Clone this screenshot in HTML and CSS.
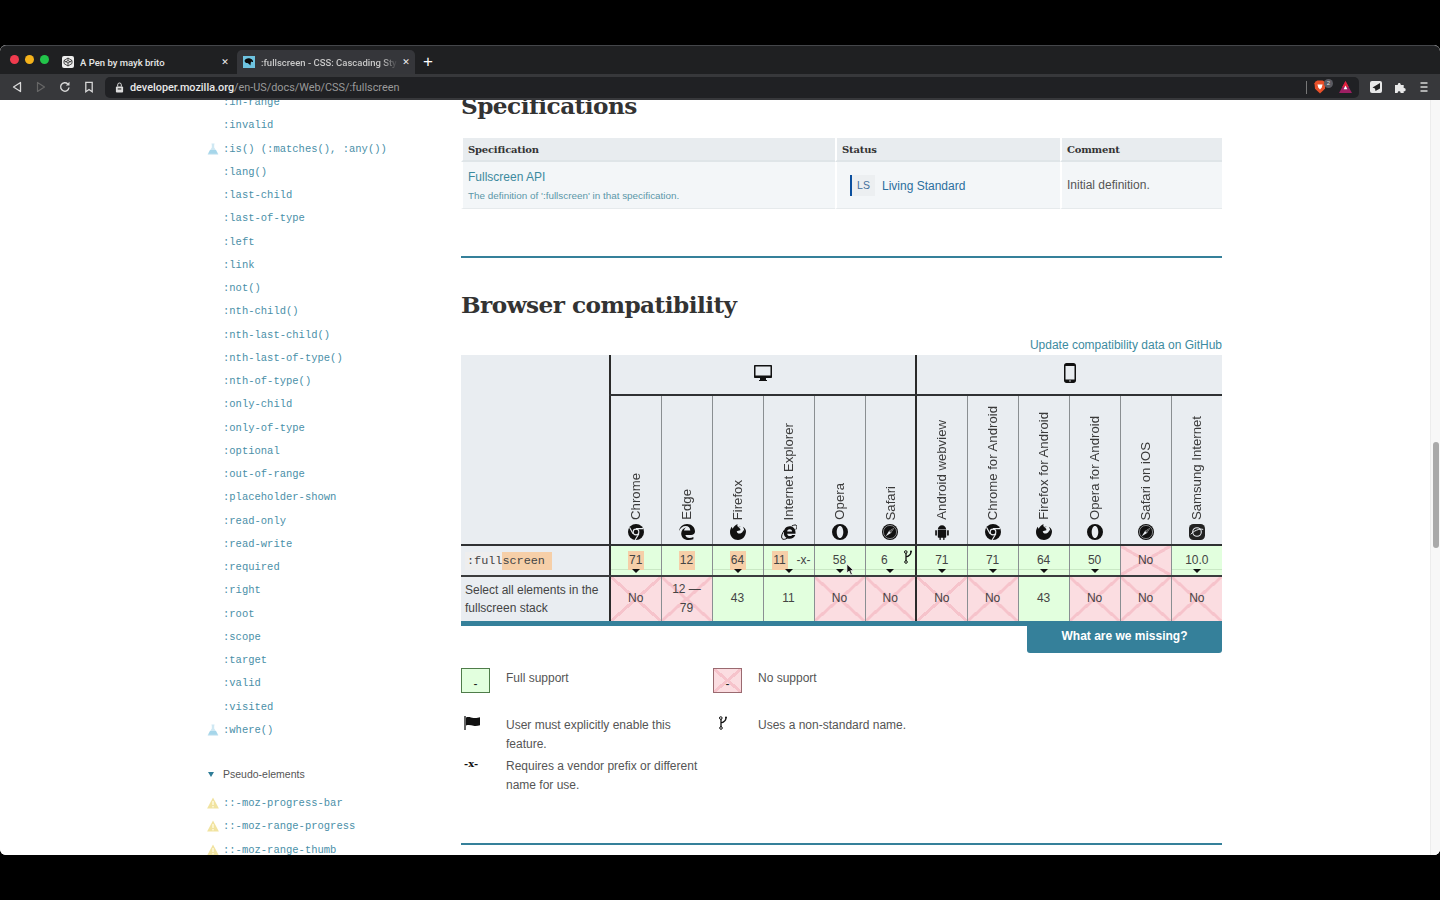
FILE: index.html
```html
<!DOCTYPE html>
<html lang="en">
<head>
    <meta charset="UTF-8">
    <title>:fullscreen - CSS: Cascading Style Sheets | MDN</title>
    <link rel="stylesheet" href="styles.css">
</head>
<body>

<svg class="sprites" width="0" height="0">
    <symbol id="i-chrome" viewBox="0 0 16 16">
        <circle cx="8" cy="8" r="8" fill="#111"/>
        <circle cx="8" cy="8" r="3.4" fill="#e9edf1"/>
        <circle cx="8" cy="8" r="2.3" fill="#111"/>
        <path d="M8 4.6h7M5 9.7 1.6 3.6M10.9 9.7 7.2 15.9" stroke="#e9edf1" stroke-width="1.1" fill="none"/>
    </symbol>
    <symbol id="i-edge" viewBox="0 0 16 16">
        <path d="M8 0c4.700 0 8 3.200 8 7.600 0 2.200-1.700 3.400-4 3.400H6.400c.3 2 2 3 4 3 1.500 0 2.900-.4 4-1.100v2.300C13 15.700 11.300 16 9.600 16 5 16 2.200 13.300 2.200 9.500c0-3 2-5.500 5-6.300-1.300 1-2 2.200-2.200 3.400h6.300C11.300 4 9.500 2 6.700 2 3.700 2 1.200 4 0 7 .6 3 3.800 0 8 0Z" fill="#111"/>
    </symbol>
    <symbol id="i-firefox" viewBox="0 0 16 16">
        <path d="M16 7c0 5-3.400 9-8 9-4.500 0-8-3.500-8-8 0-2 .7-3.800 1.800-5.200C2 3.700 2.300 4.300 2.800 4.700 3.300 3 5 1.200 7.600 0c-.5 1.200-.3 2.200.5 3 .9-.3 1.900-.3 2.800.1-1-.2-2 .1-2.600.7 1.400.2 2.300 1.300 2.100 2.400-1.300.6-2.900.5-3.700 1.300.3 1.600 1.900 2.300 3.500 1.900 1.700-.4 2.900-1.800 3-3.500.5.500.8 1.100.9 1.800.3-1.600-.2-3.600-1.300-5C14.300 3.500 15.800 5 16 7Z" fill="#111"/>
    </symbol>
    <symbol id="i-ie" viewBox="0 0 16 16">
        <path fill-rule="evenodd" d="M8.600 2.200c3.500 0 5.900 2.500 5.900 6v1.500H6.200c.1 1.500 1.200 2.400 2.600 2.400 1 0 1.900-.4 2.300-1.200h3.200c-.7 2.300-3 3.800-5.500 3.800-3.600 0-6-2.400-6-6 0-3.700 2.500-6.500 5.800-6.500Zm-2.400 5.300h4.900c-.1-1.400-1-2.300-2.400-2.300s-2.400.9-2.500 2.300Z" fill="#111"/>
        <path d="M3.500 6C1 9.300-.1 12.800 1 14.500c1 1.400 3.200 1 5.800-.6M10.800 2c2.400-1.200 4.200-1.400 4.800-.4.600.9.200 2.400-.8 4" fill="none" stroke="#111" stroke-width="1"/>
    </symbol>
    <symbol id="i-opera" viewBox="0 0 16 16">
        <path fill-rule="evenodd" d="M8 0a8 8 0 1 0 0 16A8 8 0 0 0 8 0Zm0 2c1.900 0 3.300 2.700 3.300 6S9.900 14 8 14 4.700 11.300 4.700 8 6.100 2 8 2Z" fill="#111"/>
    </symbol>
    <symbol id="i-safari" viewBox="0 0 16 16">
        <circle cx="8" cy="8" r="8" fill="#111"/>
        <circle cx="8" cy="8" r="6.600" fill="none" stroke="#e9edf1" stroke-width=".5"/>
        <path d="M12.300 3.700 9 9 3.700 12.300 7 7Z" fill="#e9edf1"/>
        <path d="M12.300 3.700 7 7 9 9Z" fill="#555"/>
    </symbol>
    <symbol id="i-android" viewBox="0 0 16 16">
        <path d="M3.800 5.400C4 3 5.800 1.300 8 1.300s4 1.700 4.200 4.100ZM3.800 6.100h8.400v6.700c0 .6-.4 1-1 1h-.7v1.600c0 .8-1.300.8-1.300 0v-1.600H6.800v1.600c0 .8-1.300.8-1.300 0v-1.600h-.7c-.6 0-1-.4-1-1ZM2 6.100c.5 0 .9.300.9.800v4c0 1-1.700 1-1.700 0v-4c0-.5.300-.8.800-.8ZM14 6.100c.5 0 .8.300.8.800v4c0 1-1.700 1-1.700 0v-4c0-.5.400-.8.900-.8Z" fill="#111"/>
    </symbol>
    <symbol id="i-samsung" viewBox="0 0 16 16">
        <rect width="16" height="16" rx="4.500" fill="#222"/>
        <circle cx="8" cy="8" r="4.300" fill="none" stroke="#e9edf1" stroke-width="1.100"/>
        <path d="M1.800 10.300C4 7.200 10.800 4 14.200 5.500" fill="none" stroke="#e9edf1" stroke-width="1"/>
    </symbol>
    <symbol id="i-fork" viewBox="0 0 10 14">
        <path d="M3 3v8M8 1.500c0 3-1.500 4.500-5 5.500" fill="none" stroke="#111" stroke-width="1.300"/>
        <circle cx="2.800" cy="2" r="1.300" fill="none" stroke="#111"/>
        <circle cx="8" cy="1.500" r="1" fill="#111"/>
        <circle cx="3" cy="12" r="1.300" fill="none" stroke="#111"/>
    </symbol>
    <symbol id="i-flask" viewBox="0 0 12 12">
        <path d="M4.500.5h3v.8l-.3.2v3l4 6.200c.3.500 0 1-.6 1H1.400c-.6 0-.9-.5-.6-1l4-6.200v-3l-.3-.2Z" fill="#cfe8f3"/>
        <path d="M3 7h6l1.700 3.800H1.300Z" fill="#a6d6ea"/>
    </symbol>
    <symbol id="i-warn" viewBox="0 0 12 12">
        <path d="M6 .4 11.900 11.500H.1Z" fill="#f1e3a0"/>
        <rect x="5.300" y="4" width="1.400" height="4" fill="#fffbe0"/>
        <rect x="5.300" y="9" width="1.400" height="1.400" fill="#fffbe0"/>
    </symbol>
</svg>

<div class="window">

    <!-- tabs -->
    <div class="tabbar">
        <div class="lights">
            <span class="light red"></span>
            <span class="light yellow"></span>
            <span class="light green"></span>
        </div>
        <div class="tab">
            <svg class="favicon" viewBox="0 0 12 12">
                <rect width="12" height="12" rx="2" fill="#eee"/>
                <path d="M6 2 10 4.500v3L6 10 2 7.500v-3ZM2 4.500 6 7l4-2.500M6 2v2.500L3.500 6M6 4.500 8.500 6M6 10V7" fill="none" stroke="#222" stroke-width=".8"/>
            </svg>
            <span class="tab-title">A Pen by mayk brito</span>
            <span class="tab-close">✕</span>
        </div>
        <div class="tab active">
            <svg class="favicon" viewBox="0 0 12 12">
                <rect width="12" height="12" fill="#6ec3e0"/>
                <path d="M1.500 5C2 2.800 4.500 2 7 2.500 9 3 10.500 4.500 10 6c-.8.300-1.600 0-2-.4L7.400 9.500 6 8 4.500 7C3 7.200 2 6.300 1.500 5Z" fill="#0b0b0b"/>
            </svg>
            <span class="tab-title fade">:fullscreen - CSS: Cascading Sty</span>
            <span class="tab-close">✕</span>
        </div>
        <span class="new-tab">+</span>
    </div>

    <!-- toolbar -->
    <div class="toolbar">
        <div class="nav-icons">
            <svg viewBox="0 0 12 12"><path d="M9.500 1.500v9L2.500 6Z" fill="none" stroke="#d8d8d8" stroke-width="1.300" stroke-linejoin="round"/></svg>
            <svg viewBox="0 0 12 12"><path d="M2.500 1.500v9l7-4.500Z" fill="none" stroke="#666" stroke-width="1.200" stroke-linejoin="round"/></svg>
            <svg viewBox="0 0 12 12"><path d="M10 6.500A4.200 4.200 0 1 1 8.800 3" fill="none" stroke="#d8d8d8" stroke-width="1.400"/><path d="M10.500 .8v3.700H6.800Z" fill="#d8d8d8"/></svg>
            <svg viewBox="0 0 12 12"><path d="M2.800 1.300h6.400v9.400L6 8.500l-3.200 2.200Z" fill="none" stroke="#d8d8d8" stroke-width="1.300"/></svg>
        </div>
        <div class="urlbar">
            <svg class="lock" viewBox="0 0 10 12"><rect x="1" y="5" width="8" height="6.500" rx="1" fill="#ddd"/><path d="M3 5V3a2 2 0 0 1 4 0v2" fill="none" stroke="#ddd" stroke-width="1.100"/><rect x="3" y="7" width="4" height="1.200" fill="#222"/></svg>
            <span class="url"><b>developer.mozilla.org</b>/en-US/docs/Web/CSS/:fullscreen</span>
            <span class="url-sep"></span>
            <svg class="brave" viewBox="0 0 14 16"><path d="M2 1.500 4 .5h6l2 1 1.500 2-.7 6.500L7 15.500 1.200 10 .5 3.500Z" fill="#e8502a"/><path d="M4 5h6L9 8.500 7 11 5 8.500Z" fill="#fff"/></svg>
            <span class="brave-count">2</span>
            <svg class="bat" viewBox="0 0 14 13"><path d="M7 0 14 13H0Z" fill="#9e1f63"/><path d="M7 0 10.500 6.500h-7Z" fill="#e0213d"/><path d="M7 5 9 9H5Z" fill="#fff"/></svg>
        </div>
        <div class="ext-icons">
            <svg viewBox="0 0 12 12"><rect width="12" height="12" rx="2" fill="#e8e8e8"/><path d="M10 2 2.500 6.500l2.500 1 .5 2.500L10 7.500Z" fill="#222"/></svg>
            <svg viewBox="0 0 12 12"><path d="M1 4h2.800c-.5-2.700 3.400-2.700 2.900 0h3v3c2.600-.5 2.600 3.800 0 3.300V12H6.500c.5-2.400-3.200-2.400-2.800 0H1Z" fill="#e8e8e8"/></svg>
            <svg viewBox="0 0 12 12"><path d="M2.500 2h7M2.500 6h7M2.500 10h7" stroke="#d8d8d8" stroke-width="1.500"/></svg>
        </div>
    </div>

    <!-- page -->
    <div class="page">
        <nav class="sidebar">
            <ul class="side-list">
                <li>:in-range</li>
                <li>:invalid</li>
                <li><svg class="badge"><use href="#i-flask"/></svg>:is() (:matches(), :any())</li>
                <li>:lang()</li>
                <li>:last-child</li>
                <li>:last-of-type</li>
                <li>:left</li>
                <li>:link</li>
                <li>:not()</li>
                <li>:nth-child()</li>
                <li>:nth-last-child()</li>
                <li>:nth-last-of-type()</li>
                <li>:nth-of-type()</li>
                <li>:only-child</li>
                <li>:only-of-type</li>
                <li>:optional</li>
                <li>:out-of-range</li>
                <li>:placeholder-shown</li>
                <li>:read-only</li>
                <li>:read-write</li>
                <li>:required</li>
                <li>:right</li>
                <li>:root</li>
                <li>:scope</li>
                <li>:target</li>
                <li>:valid</li>
                <li>:visited</li>
                <li><svg class="badge"><use href="#i-flask"/></svg>:where()</li>
            </ul>
            <div class="side-title"><span class="caret"></span>Pseudo-elements</div>
            <ul class="side-list">
                <li><svg class="badge"><use href="#i-warn"/></svg>::-moz-progress-bar</li>
                <li><svg class="badge"><use href="#i-warn"/></svg>::-moz-range-progress</li>
                <li><svg class="badge"><use href="#i-warn"/></svg>::-moz-range-thumb</li>
            </ul>
        </nav>

        <main class="content">
            <h2 class="spec-heading">Specifications</h2>

            <table class="spec-table">
                <thead>
                    <tr>
                        <th class="col-spec">Specification</th>
                        <th class="col-status">Status</th>
                        <th>Comment</th>
                    </tr>
                </thead>
                <tbody>
                    <tr>
                        <td>
                            <a class="spec-link">Fullscreen API</a>
                            <div class="spec-note">The definition of ':fullscreen' in that specification.</div>
                        </td>
                        <td><span class="ls">LS</span><a class="status-link">Living Standard</a></td>
                        <td>Initial definition.</td>
                    </tr>
                </tbody>
            </table>

            <hr class="rule first">

            <h2 class="compat-heading">Browser compatibility</h2>
            <div class="update-link">Update compatibility data on GitHub</div>

            <table class="bc-table">
                <colgroup>
                    <col class="c-name">
                    <col span="12" class="c-browser">
                </colgroup>
                <thead>
                    <tr class="platforms">
                        <th class="corner" rowspan="2"></th>
                        <th colspan="6" class="edge">
                            <svg class="platform-icon" viewBox="0 0 20 18"><path d="M2 1h16c.6 0 1 .4 1 1v11c0 .6-.4 1-1 1h-5v2h1v1H6v-1h1v-2H2c-.6 0-1-.4-1-1V2c0-.6.4-1 1-1Zm.5 1.500v9h15v-9Z" fill="#111" fill-rule="evenodd"/></svg>
                        </th>
                        <th colspan="6" class="edge">
                            <svg class="platform-icon" viewBox="0 0 20 20"><path fill-rule="evenodd" d="M6.500 0h7C14.900 0 16 1 16 2.400v15.200c0 1.400-1.100 2.400-2.500 2.400h-7C5.100 20 4 19 4 17.600V2.400C4 1 5.100 0 6.500 0ZM5.500 3v13.500h9V3ZM10 17.200a.8.800 0 1 0 0 1.600.8.800 0 0 0 0-1.600Z" fill="#111"/></svg>
                        </th>
                    </tr>
                    <tr class="browsers">
                        <th class="edge"><div class="browser"><span>Chrome</span><svg><use href="#i-chrome"/></svg></div></th>
                        <th><div class="browser"><span>Edge</span><svg><use href="#i-edge"/></svg></div></th>
                        <th><div class="browser"><span>Firefox</span><svg><use href="#i-firefox"/></svg></div></th>
                        <th><div class="browser"><span>Internet Explorer</span><svg><use href="#i-ie"/></svg></div></th>
                        <th><div class="browser"><span>Opera</span><svg><use href="#i-opera"/></svg></div></th>
                        <th><div class="browser"><span>Safari</span><svg><use href="#i-safari"/></svg></div></th>
                        <th class="edge"><div class="browser"><span>Android webview</span><svg><use href="#i-android"/></svg></div></th>
                        <th><div class="browser"><span>Chrome for Android</span><svg><use href="#i-chrome"/></svg></div></th>
                        <th><div class="browser"><span>Firefox for Android</span><svg><use href="#i-firefox"/></svg></div></th>
                        <th><div class="browser"><span>Opera for Android</span><svg><use href="#i-opera"/></svg></div></th>
                        <th><div class="browser"><span>Safari on iOS</span><svg><use href="#i-safari"/></svg></div></th>
                        <th><div class="browser"><span>Samsung Internet</span><svg><use href="#i-samsung"/></svg></div></th>
                    </tr>
                </thead>
                <tbody>
                    <tr class="row-main">
                        <th class="feature"><code>:full<span class="code-hl">screen</span></code></th>
                        <td class="yes edge note"><span class="hl">71</span></td>
                        <td class="yes note-off"><span class="hl">12</span></td>
                        <td class="yes note"><span class="hl">64</span></td>
                        <td class="yes note prefixed"><span class="hl">11</span><span class="prefix">-x-</span></td>
                        <td class="yes note">58</td>
                        <td class="yes note forked">6<svg class="fork"><use href="#i-fork"/></svg></td>
                        <td class="yes edge note">71</td>
                        <td class="yes note">71</td>
                        <td class="yes note">64</td>
                        <td class="yes note">50</td>
                        <td class="no">No</td>
                        <td class="yes note">10.0</td>
                    </tr>
                    <tr class="row-sub">
                        <th class="feature">Select all elements in the fullscreen stack</th>
                        <td class="no edge">No</td>
                        <td class="no">12 —<br>79</td>
                        <td class="yes">43</td>
                        <td class="yes">11</td>
                        <td class="no">No</td>
                        <td class="no">No</td>
                        <td class="no edge">No</td>
                        <td class="no">No</td>
                        <td class="yes">43</td>
                        <td class="no">No</td>
                        <td class="no">No</td>
                        <td class="no">No</td>
                    </tr>
                </tbody>
            </table>
            <div class="bc-foot">
                <a class="missing">What are we missing?</a>
            </div>

            <div class="legend">
                <div class="legend-item">
                    <span class="swatch yes">-</span>
                    <span class="legend-text">Full support</span>
                </div>
                <div class="legend-item">
                    <span class="swatch no">-</span>
                    <span class="legend-text">No support</span>
                </div>
                <div class="legend-item tall">
                    <svg class="legend-icon" viewBox="0 0 18 14"><path d="M1 0v14" stroke="#111" stroke-width="1.300"/><path d="M2 1.500c3-1.200 5 .2 7.500.5 2.500.3 5-.3 6.500-.8v8c-2 .7-4.500 1-6.500.6-2.500-.5-4.500-1.400-7.500-.3Z" fill="#111"/></svg>
                    <span class="legend-text">User must explicitly enable this feature.</span>
                </div>
                <div class="legend-item tall">
                    <svg class="legend-icon fork-icon"><use href="#i-fork"/></svg>
                    <span class="legend-text">Uses a non-standard name.</span>
                </div>
                <div class="legend-item">
                    <span class="legend-prefix">-x-</span>
                    <span class="legend-text">Requires a vendor prefix or different name for use.</span>
                </div>
            </div>

            <hr class="rule last">
        </main>
    </div>

    <div class="scrollbar"><div class="thumb"></div></div>

    <svg class="cursor" viewBox="0 0 10 14"><path d="M1 1v10l2.500-2.200L5.300 13l1.800-.8-1.800-4H8.500Z" fill="#111" stroke="#fff" stroke-width=".8"/></svg>
</div>

</body>
</html>
```

FILE: styles.css
```css
* {
    box-sizing: border-box;
}

html, body {
    margin: 0;
    height: 100%;
    background-color: #000;
    overflow: hidden;
}

body {
    padding-top: 45px;
    font-family: "Liberation Sans", Arial, sans-serif;
    color: #333;
}

.sprites {
    display: block;
    height: 0;
}

.window {
    position: relative;
    display: flex;
    flex-direction: column;
    height: 810px;
    border-radius: 6px;
    overflow: hidden;
    background-color: #fff;
}

/* Tabs */
.tabbar {
    display: flex;
    align-items: flex-end;
    height: 29px;
    flex-shrink: 0;
    background-color: #1f2022;
    border-top: 1px solid #44464a;
    border-radius: 6px 6px 0 0;
}

.lights {
    display: flex;
    gap: 6px;
    align-self: center;
    padding-left: 10px;
    margin-right: 7px;
    margin-top: -2px;
}

.light {
    width: 9px;
    height: 9px;
    border-radius: 50%;
}

.red { background-color: #f03b4e; }
.yellow { background-color: #f4b21b; }
.green { background-color: #22c44a; }

.tab {
    display: flex;
    align-items: center;
    width: 178px;
    height: 24px;
    margin-right: 3px;
    padding: 0 3px 0 6px;
    color: #e6e6e6;
    font-family: Roboto, sans-serif;
    font-size: 9.500px;
    font-weight: 500;
    border-radius: 5px 5px 0 0;
}

.tab.active {
    background-color: #35363a;
}

.favicon {
    width: 12px;
    height: 12px;
    margin-right: 6px;
    flex-shrink: 0;
}

.tab-title {
    flex: 1;
    white-space: nowrap;
    overflow: hidden;
}

.tab-title.fade {
    color: #c8c8c8;
    -webkit-mask-image: linear-gradient(to right, #000 88%, transparent);
    mask-image: linear-gradient(to right, #000 88%, transparent);
}

.tab-close {
    width: 12px;
    margin-left: 2px;
    font-size: 9px;
    font-family: "DejaVu Sans", sans-serif;
    text-align: center;
    color: #f0f0f0;
}

.new-tab {
    width: 24px;
    height: 24px;
    margin-left: -2px;
    color: #fff;
    font-size: 17px;
    line-height: 24px;
    text-align: center;
}

/* Toolbar */
.toolbar {
    display: flex;
    align-items: center;
    height: 26px;
    flex-shrink: 0;
    background-color: #37383b;
}

.nav-icons {
    display: flex;
    gap: 12px;
    width: 105px;
    padding-left: 11px;
}

.nav-icons svg {
    width: 12px;
    height: 12px;
}

.urlbar {
    display: flex;
    align-items: center;
    width: 1254px;
    height: 21px;
    padding-left: 10px;
    background-color: #202124;
    border-radius: 5px;
}

.lock {
    width: 9px;
    height: 11px;
    margin-right: 6px;
}

.url {
    flex: 1;
    font-family: Roboto, sans-serif;
    font-size: 10.850px;
    color: #9a9a9a;
}

.url b {
    font-weight: 500;
    color: #e8e8e8;
}

.url-sep {
    width: 1px;
    height: 13px;
    margin-right: 7px;
    background-color: #777;
}

.brave {
    width: 12px;
    height: 14px;
}

.brave-count {
    width: 9px;
    height: 9px;
    margin: -8px 0 0 -2px;
    color: #ddd;
    font-size: 6px;
    line-height: 9px;
    text-align: center;
    background-color: #5a5b62;
    border-radius: 50%;
}

.bat {
    width: 13px;
    height: 12px;
    margin: 0 7px 0 6px;
}

.ext-icons {
    display: flex;
    gap: 12px;
    padding-left: 11px;
}

.ext-icons svg {
    width: 12px;
    height: 12px;
}

/* Page */
.page {
    display: flex;
    flex: 1;
    min-height: 0;
    overflow: hidden;
    background-color: #fff;
}

.sidebar {
    width: 461px;
    flex-shrink: 0;
    padding-left: 223px;
    margin-top: -8.800px;
}

.side-list {
    margin: 0;
    padding: 0;
    list-style: none;
}

.side-list li {
    position: relative;
    height: 23.250px;
    line-height: 23.250px;
    font-family: "Liberation Mono", monospace;
    font-size: 10.500px;
    color: #4a8fa8;
    white-space: nowrap;
}

.badge {
    position: absolute;
    left: -16px;
    top: 5px;
    width: 12px;
    height: 12px;
}

.side-title {
    position: relative;
    margin-top: 25px;
    margin-bottom: 11px;
    font-size: 10.500px;
    line-height: 14px;
    color: #555;
}

.caret {
    position: absolute;
    left: -15px;
    top: 5px;
    border-style: solid;
    border-width: 5px 3px 0;
    border-color: #2f7d98 transparent transparent;
}

.content {
    width: 761px;
    flex-shrink: 0;
}

h2 {
    margin: 0;
    font-family: "DejaVu Serif", "Liberation Serif", serif;
    font-weight: bold;
    color: #333;
    letter-spacing: -.55px;
}

.spec-heading {
    margin-top: -8px;
    font-size: 23.200px;
    line-height: 27px;
}

/* Specifications table */
.spec-table {
    width: 761px;
    margin-top: 19px;
    border-collapse: separate;
    border-spacing: 0;
    table-layout: fixed;
    font-size: 12px;
}

.col-spec { width: 374px; }
.col-status { width: 225px; }

.spec-table th {
    height: 24px;
    padding: 0 5px;
    text-align: left;
    font-family: "DejaVu Serif", serif;
    font-size: 10px;
    letter-spacing: -.2px;
    color: #333;
    background-color: #e8ecef;
    border-left: 2px solid #fff;
    border-bottom: 2px solid #dfe5e8;
}

.spec-table td {
    height: 47px;
    padding: 0 5px;
    color: #555;
    background-color: #f3f6f8;
    border-left: 2px solid #fff;
    border-bottom: 1px solid #e6eaec;
}

.spec-link {
    font-size: 12px;
    color: #3d8a9e;
}

.spec-note {
    margin-top: 6px;
    font-size: 9.900px;
    color: #5b97a8;
}

.ls {
    display: inline-block;
    width: 25px;
    height: 21px;
    margin: 0 7px 0 8px;
    color: #44709c;
    font-size: 10.500px;
    line-height: 21px;
    text-align: center;
    background-color: #eceff1;
    border-left: 2px solid #0b4f9e;
    vertical-align: middle;
}

.status-link {
    font-size: 12px;
    color: #2c6f9e;
    vertical-align: middle;
}

.rule {
    width: 761px;
    height: 2px;
    margin: 0;
    border: 0;
    background-color: #35809a;
}

.rule.first {
    margin-top: 47px;
}

.compat-heading {
    margin-top: 31px;
    font-size: 23.200px;
    line-height: 32px;
}

.update-link {
    margin-top: 16px;
    font-size: 12px;
    line-height: 16px;
    text-align: right;
    color: #3d8ba0;
}

/* Compatibility table */
.bc-table {
    width: 761px;
    margin-top: 2px;
    table-layout: fixed;
    border-collapse: collapse;
    font-size: 12px;
    color: #444;
}

.c-name { width: 149px; }
.c-browser { width: 51px; }

.bc-table th,
.bc-table td {
    padding: 0;
    background-color: #e9edf1;
    font-weight: normal;
    text-align: center;
    border-left: 1px solid #8a8f92;
}

.bc-table .corner,
.bc-table .feature {
    border-left: 0;
}

.bc-table .edge {
    border-left: 2px solid #2a2a2a;
}

.platforms th {
    height: 40px;
    padding-bottom: 3px;
    border-bottom: 2px solid #2f3133;
    vertical-align: middle;
}

.platform-icon {
    display: block;
    width: 20px;
    height: 20px;
    margin: 0 auto;
}

.browsers th {
    height: 150px;
    vertical-align: bottom;
    border-bottom: 2px solid #2f3133;
}

.browser {
    display: flex;
    flex-direction: column;
    align-items: center;
    padding-bottom: 4px;
}

.browser span {
    writing-mode: vertical-rl;
    transform: rotate(180deg);
    font-size: 13.200px;
    white-space: nowrap;
    color: #3a3a3a;
}

.browser svg {
    width: 16px;
    height: 16px;
    margin-top: 4px;
}

.row-main th,
.row-main td {
    height: 31px;
    padding-bottom: 1px;
    border-bottom: 2px solid #3a3c3e;
}

.row-sub th,
.row-sub td {
    height: 45px;
    line-height: 18.500px;
}

.row-sub td {
    padding-bottom: 1px;
}

.bc-table .feature {
    padding-left: 4px;
    text-align: left;
    line-height: 18.500px;
    color: #444;
}

.feature code {
    display: inline-block;
    padding-left: 2px;
    font-family: "Liberation Mono", monospace;
    font-size: 11.800px;
    line-height: 18px;
    background-color: #eee;
}

.code-hl {
    display: inline-block;
    padding-right: 7px;
    background-color: #f6cfa8;
}

.bc-table .yes,
.swatch.yes {
    background-color: #e2ffde;
}

.bc-table .no,
.swatch.no {
    background-color: #fbdde1;
    background-image:
        linear-gradient(to top right, transparent calc(50% - 1.500px), #f6c3cb calc(50% - 1.500px), #f6c3cb calc(50% + 1.500px), transparent calc(50% + 1.500px)),
        linear-gradient(to bottom right, transparent calc(50% - 1.500px), #f6c3cb calc(50% - 1.500px), #f6c3cb calc(50% + 1.500px), transparent calc(50% + 1.500px));
}

.bc-table .note,
.bc-table .note-off {
    position: relative;
}

.bc-table .note {
    background-image: linear-gradient(#c9e8c4, #c9e8c4);
    background-repeat: no-repeat;
    background-size: 100% 1px;
    background-position: 0 23px;
}

.bc-table .note::after {
    content: "";
    position: absolute;
    left: 50%;
    bottom: 2px;
    margin-left: -4px;
    border-style: solid;
    border-width: 4px 4px 0;
    border-color: #111 transparent transparent;
}

.hl {
    display: inline-block;
    width: 16px;
    line-height: 19px;
    background-color: #f6cfa8;
}

.prefixed {
    padding-right: 18px !important;
}

.prefix {
    position: absolute;
    left: 33px;
    top: 7px;
}

.fork {
    position: absolute;
    right: 2px;
    top: 4px;
    width: 10px;
    height: 14px;
}

.forked {
    padding-right: 12px !important;
}

.bc-foot {
    display: flex;
    justify-content: flex-end;
    border-top: 5px solid #35809a;
}

.missing {
    width: 195px;
    height: 27px;
    color: #fff;
    font-size: 12px;
    font-weight: bold;
    line-height: 21px;
    text-align: center;
    background-color: #35809a;
    border-radius: 0 0 3px 3px;
}

/* Legend */
.legend {
    display: grid;
    grid-template-columns: 252px 252px;
    margin-top: 15px;
    font-size: 12px;
    line-height: 19px;
    color: #555;
}

.legend-item {
    display: flex;
    align-items: flex-start;
}

.legend-text {
    width: 200px;
    padding-top: 1px;
}

.legend-item:nth-child(1),
.legend-item:nth-child(2) {
    height: 47px;
}

.legend-item:nth-child(3),
.legend-item:nth-child(4) {
    height: 41px;
}

.swatch {
    width: 29px;
    height: 25px;
    margin-right: 16px;
    color: #222;
    font-size: 12px;
    line-height: 30px;
    text-align: center;
    border: 1px solid #4f7c4a;
}

.swatch.no {
    border-color: #9a6a70;
}

.legend-icon {
    width: 18px;
    height: 14px;
    margin: 1px 24px 0 3px;
}

.legend-item:nth-child(4) .fork-icon {
    width: 10px;
    height: 14px;
    margin: 1px 30px 0 5px;
}

.legend-prefix {
    width: 45px;
    padding-left: 3px;
    color: #111;
    font-family: "DejaVu Serif", serif;
    font-size: 10px;
    font-weight: bold;
    line-height: 15px;
}

.rule.last {
    margin-top: 48px;
}

/* Overlays */
.scrollbar {
    position: absolute;
    right: 0;
    top: 55px;
    bottom: 0;
    width: 10px;
    background-color: #f7f7f7;
    border-left: 1px solid #ececec;
}

.thumb {
    position: absolute;
    left: 2px;
    top: 342px;
    width: 6px;
    height: 106px;
    background-color: #a9a9a9;
    border-radius: 3px;
}

.cursor {
    position: absolute;
    left: 846px;
    top: 518px;
    width: 9px;
    height: 13px;
}
```
